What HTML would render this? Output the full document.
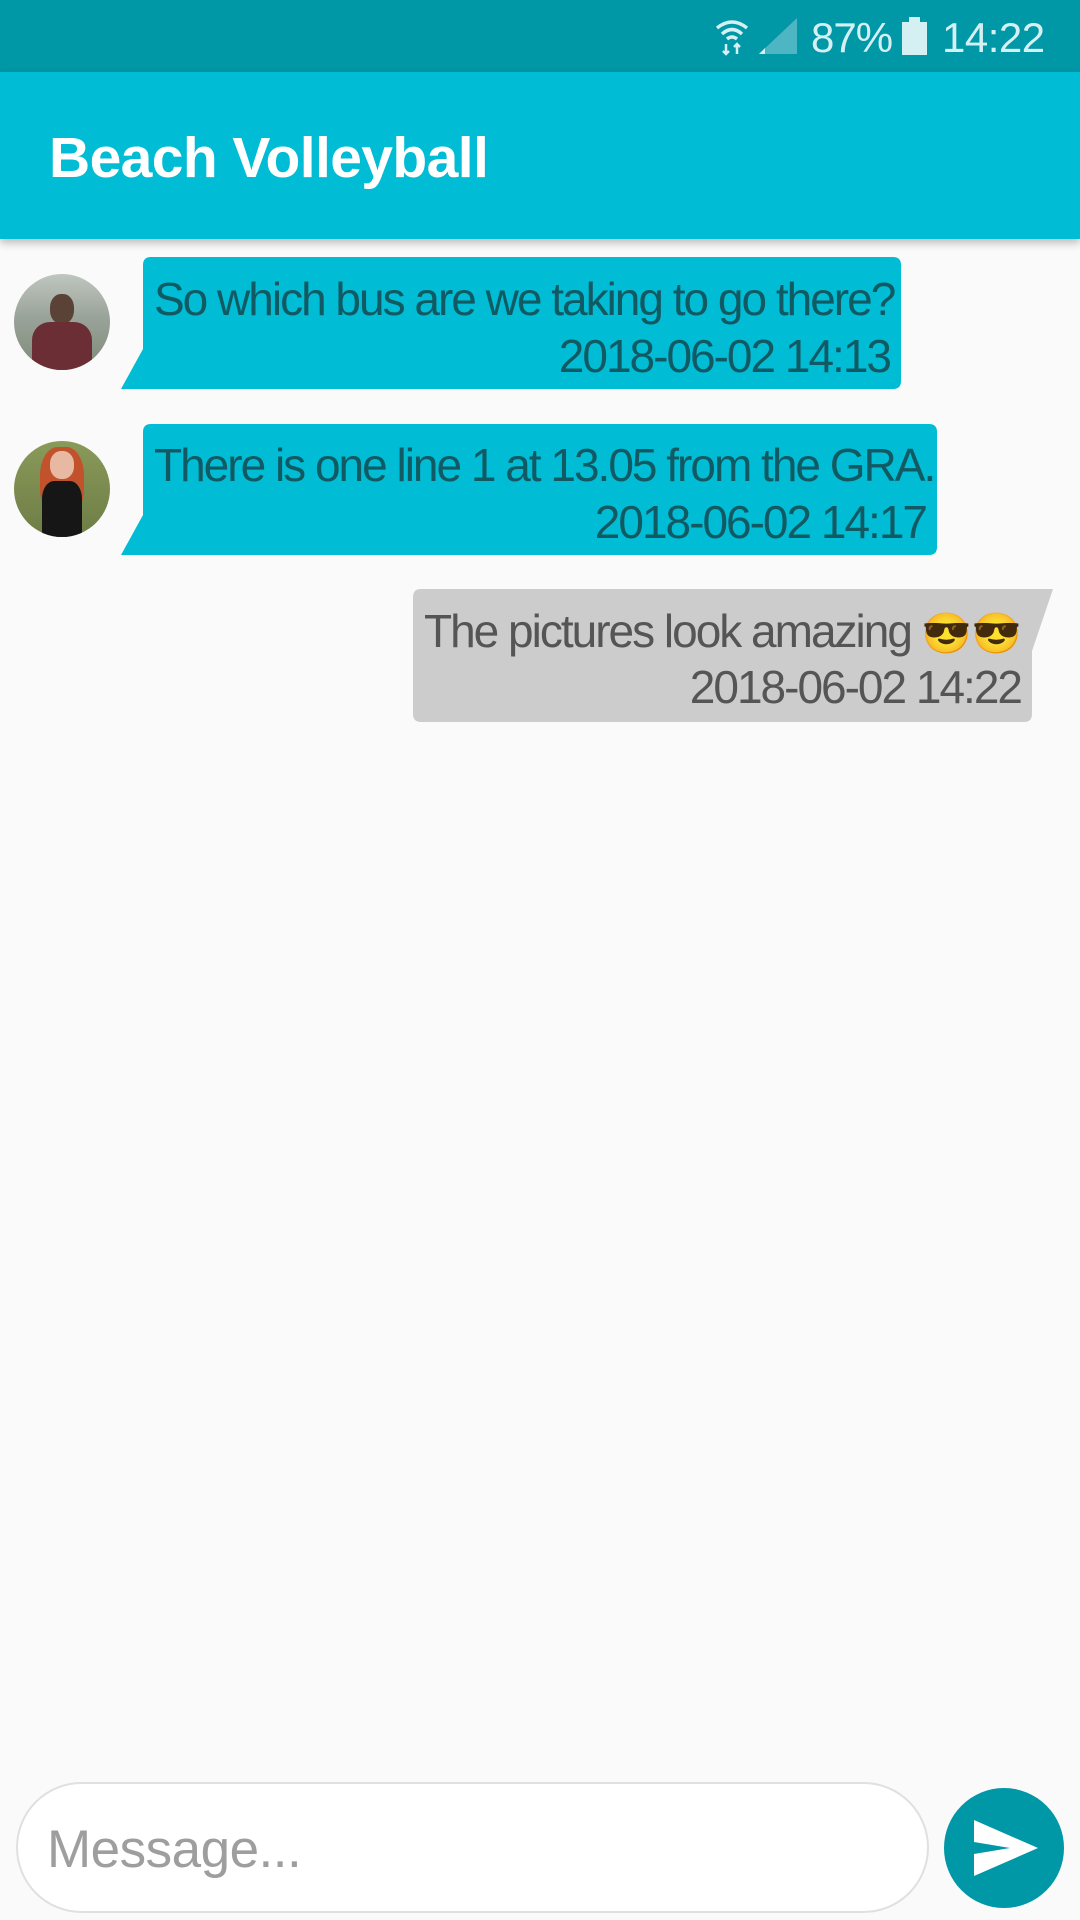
<!DOCTYPE html>
<html><head><meta charset="utf-8"><style>
*{margin:0;padding:0;box-sizing:border-box}
body{width:1080px;height:1920px;background:#fafafa;font-family:"Liberation Sans",sans-serif;position:relative;overflow:hidden}
.abs{position:absolute}
.status{left:0;top:0;width:1080px;height:72px;background:#0097a7;color:#d4f0f3}
.appbar{left:0;top:72px;width:1080px;height:167px;background:#00bcd4;box-shadow:0 4px 8px rgba(0,0,0,.25)}
.title{left:49px;top:125px;color:#fff;font-size:57px;font-weight:bold;letter-spacing:-0.6px}
.txt{position:absolute;font-size:46px;letter-spacing:-2px;white-space:nowrap}
.av{position:absolute;width:96px;height:96px;border-radius:50%;overflow:hidden}
.emo{font-size:40px;letter-spacing:0}
</style></head><body>
<div class="abs status">
 <svg class="abs" style="left:715px;top:18px" width="34" height="38" viewBox="0 0 34 38"><path d="M2 10 Q17 -2 32 10" stroke="#d4f0f3" stroke-width="3.5" fill="none"/><path d="M7 16 Q17 7 27 16" stroke="#d4f0f3" stroke-width="3.5" fill="none"/><path d="M12 21 Q17 17 22 21" stroke="#d4f0f3" stroke-width="3.5" fill="none"/><path d="M11 26v10M8 33l3 3 3-3M22 36V26M19 29l3-3 3 3" stroke="#d4f0f3" stroke-width="2.5" fill="none"/></svg>
 <svg class="abs" style="left:759px;top:18px" width="38" height="36"><polygon points="0,36 38,0 38,36" fill="#4db6c2"/><polygon points="0,36 6,30 6,36" fill="#d4f0f3"/></svg>
 <div class="abs" style="left:811px;top:14px;font-size:42px;letter-spacing:-1px">87%</div>
 <div class="abs" style="left:902px;top:22px;width:25px;height:33px;background:#d4f0f3"></div>
 <div class="abs" style="left:909px;top:17px;width:11px;height:6px;background:#d4f0f3"></div>
 <div class="abs" style="left:942px;top:14px;font-size:42px;letter-spacing:-0.5px">14:22</div>
</div>
<div class="abs appbar"></div>
<div class="abs title">Beach Volleyball</div>

<div class="av" style="left:14px;top:274px;background:linear-gradient(#bfc6bf 0%,#9aa39a 45%,#7d8a78 100%)">
 <div class="abs" style="left:36px;top:20px;width:24px;height:30px;border-radius:45%;background:#5a4237"></div>
 <div class="abs" style="left:18px;top:48px;width:60px;height:60px;border-radius:30% 30% 0 0;background:#6b2e35"></div>
</div>
<svg class="abs" style="left:121px;top:257px" width="780" height="132"><path d="M22 8 Q22 0 30 0 H772 Q780 0 780 8 V124 Q780 132 772 132 H0 L22 92 Z" fill="#00bcd4"/></svg>
<div class="txt" style="left:154px;top:272px;color:#115a63">So which bus are we taking to go there?</div>
<div class="txt" style="right:190px;top:329px;color:#115a63">2018-06-02 14:13</div>

<div class="av" style="left:14px;top:441px;background:linear-gradient(#8a9a5a,#6d7d45)">
 <div class="abs" style="left:26px;top:6px;width:44px;height:70px;border-radius:40%;background:#c2522b"></div>
 <div class="abs" style="left:36px;top:10px;width:24px;height:28px;border-radius:45%;background:#e8b9a2"></div>
 <div class="abs" style="left:28px;top:40px;width:40px;height:60px;border-radius:30% 30% 0 0;background:#161616"></div>
</div>
<svg class="abs" style="left:121px;top:424px" width="816" height="131"><path d="M22 8 Q22 0 30 0 H808 Q816 0 816 8 V123 Q816 131 808 131 H0 L22 91 Z" fill="#00bcd4"/></svg>
<div class="txt" style="left:154px;top:438px;color:#115a63">There is one line 1 at 13.05 from the GRA.</div>
<div class="txt" style="right:154px;top:495px;color:#115a63">2018-06-02 14:17</div>

<svg class="abs" style="left:413px;top:589px" width="640" height="133"><path d="M0 8 Q0 0 8 0 H640 L619 62 V125 Q619 133 611 133 H8 Q0 133 0 125 Z" fill="#cccccc"/></svg>
<div class="txt" style="left:424px;top:604px;color:#555">The pictures look amazing <span class="emo">😎😎</span></div>
<div class="txt" style="right:59px;top:660px;color:#555">2018-06-02 14:22</div>

<div class="abs" style="left:16px;top:1782px;width:913px;height:131px;border:2px solid #e0e0e0;border-radius:66px;background:#fff"></div>
<div class="abs" style="left:47px;top:1819px;font-size:53px;letter-spacing:-0.5px;color:#9e9e9e">Message...</div>
<div class="abs" style="left:944px;top:1788px;width:120px;height:120px;border-radius:50%;background:#0097a7"></div>
<svg class="abs" style="left:974px;top:1820px" width="64" height="56"><polygon points="0,0 64,28 0,56 0,34 36,28 0,22" fill="#fff"/></svg>
</body></html>
